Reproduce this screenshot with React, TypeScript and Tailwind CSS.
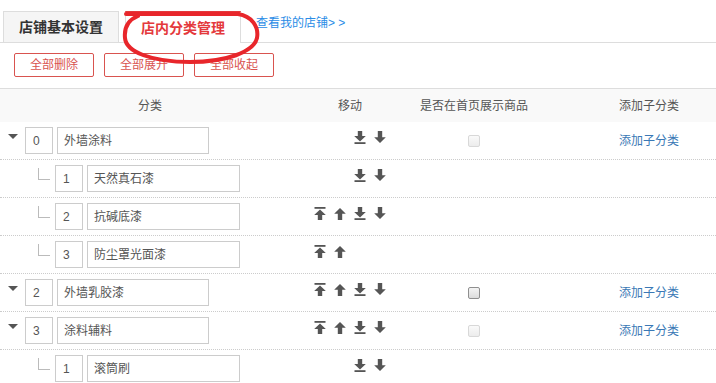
import React from "react";

type Row = {
  level: 0 | 1;
  sort: string;
  name: string;
  moves: [boolean, boolean, boolean, boolean];
  check?: "on" | "off";
  addChild?: boolean;
};

const rows: Row[] = [
  { level: 0, sort: "0", name: "外墙涂料", moves: [false, false, true, true], check: "off", addChild: true },
  { level: 1, sort: "1", name: "天然真石漆", moves: [false, false, true, true] },
  { level: 1, sort: "2", name: "抗碱底漆", moves: [true, true, true, true] },
  { level: 1, sort: "3", name: "防尘罩光面漆", moves: [true, true, false, false] },
  { level: 0, sort: "2", name: "外墙乳胶漆", moves: [true, true, true, true], check: "on", addChild: true },
  { level: 0, sort: "3", name: "涂料辅料", moves: [true, true, true, true], check: "off", addChild: true },
  { level: 1, sort: "1", name: "滚筒刷", moves: [false, false, true, true] },
];

function MoveIcon({ kind }: { kind: number }) {
  // 0: top, 1: up, 2: bottom, 3: down
  const up = kind < 2;
  const bar = kind === 0 || kind === 2;
  return (
    <svg width="12" height="13" viewBox="0 0 12 13" className="block">
      <g fill="#555" transform={up ? undefined : "rotate(180 6 6.5)"}>
        {bar && <rect x="0.5" y="0" width="11" height="1.8" />}
        <path d={bar ? "M6 2.6 L11.8 8 L8.2 8 L8.2 13 L3.8 13 L3.8 8 L0.2 8 Z" : "M6 1 L11.8 6.8 L8.2 6.8 L8.2 13 L3.8 13 L3.8 6.8 L0.2 6.8 Z"} />
      </g>
    </svg>
  );
}

function Checkbox({ state }: { state: "on" | "off" }) {
  return state === "on" ? (
    <span className="block w-[12px] h-[12px] rounded-[2px] border border-[#8f8f8f] bg-gradient-to-b from-[#f4f4f4] to-[#dcdcdc]" />
  ) : (
    <span className="block w-[12px] h-[12px] rounded-[2px] border border-[#d8d8d8] bg-gradient-to-b from-[#fafafa] to-[#ececec]" />
  );
}

export default function App() {
  return (
    <div
      className="relative w-[716px] h-[383px] overflow-hidden bg-white text-[#555]"
      style={{ fontFamily: '"Liberation Sans", "Noto Sans CJK SC", sans-serif' }}
    >
      {/* tabs */}
      <div className="flex items-end h-[43px] pl-[3px] border-b border-[#ddd]">
        <div className="w-[116px] h-[31px] flex items-center justify-center bg-[#f5f5f5] border border-b-0 border-[#ddd] text-[14px] font-bold text-[#333]">
          店铺基本设置
        </div>
        <div className="ml-[6px] w-[116px] h-[32px] -mb-px flex items-center justify-center bg-white border border-b-0 border-[#ddd] border-t-2 border-t-[#e4393c] text-[14px] font-bold text-[#e4393c]">
          店内分类管理
        </div>
        <a className="ml-[15px] mb-[10px] text-[12px] text-[#2a8ce6]">查看我的店铺&gt; &gt;</a>
      </div>

      {/* buttons */}
      <div className="flex gap-[10px] pl-[14px] pt-[10px] h-[45px]">
        {["全部删除", "全部展开", "全部收起"].map((t) => (
          <button
            key={t}
            className="w-[80px] h-[24px] border border-[#d9534f] rounded-[2px] text-[12px] text-[#d9534f] bg-white"
          >
            {t}
          </button>
        ))}
      </div>

      {/* table */}
      <div className="border-t border-[#ddd]">
        <div className="grid grid-cols-[300px_100px_148px_1fr] h-[33px] items-center bg-[#f9f9f9] text-[12px] text-[#555]">
          <div className="text-center">分类</div>
          <div className="text-center">移动</div>
          <div className="text-center">是否在首页展示商品</div>
          <div className="text-center pl-[34px]">添加子分类</div>
        </div>
        {rows.map((r, i) => (
          <div
            key={i}
            className="grid grid-cols-[300px_100px_148px_1fr] h-[38px] items-center border-b border-dotted border-[#ccc] text-[12px]"
          >
            <div className="flex items-center">
              {r.level === 0 ? (
                <>
                  <span className="ml-[8px] w-0 h-0 border-l-[5px] border-r-[5px] border-t-[5px] border-l-transparent border-r-transparent border-t-[#555] -mt-[8px]" />
                  <span className="ml-[7px] w-[28px] h-[27px] border border-[#ccc] flex items-center pl-[7px]">{r.sort}</span>
                  <span className="ml-[4px] w-[152px] h-[27px] border border-[#ccc] flex items-center pl-[6px]">{r.name}</span>
                </>
              ) : (
                <>
                  <span className="ml-[38px] w-[12px] h-[12px] border-l border-b border-[#bbb] -mt-[10px]" />
                  <span className="ml-[5px] w-[28px] h-[27px] border border-[#ccc] flex items-center pl-[7px]">{r.sort}</span>
                  <span className="ml-[4px] w-[153px] h-[27px] border border-[#ccc] flex items-center pl-[6px]">{r.name}</span>
                </>
              )}
            </div>
            <div className="flex gap-[8px] pl-[14px] -mt-[6px]">
              {r.moves.map((m, k) => (
                <span key={k} className={m ? "" : "invisible"}>
                  <MoveIcon kind={k} />
                </span>
              ))}
            </div>
            <div className="flex justify-center">
              {r.check && <Checkbox state={r.check} />}
            </div>
            <div className="text-center pl-[34px] text-[#3a78b5]">
              {r.addChild ? "添加子分类" : ""}
            </div>
          </div>
        ))}
      </div>

      {/* hand-drawn highlight */}
      <svg className="absolute left-0 top-0 pointer-events-none" width="716" height="383">
        <path
          d="M126 14 L238 14 C252 16 259 27 257 38 C254 52 226 62 190 62 C152 62 126 52 125 38 C124 28 128 20 138 16"
          fill="none"
          stroke="#e8262b"
          strokeWidth="4"
          strokeLinecap="round"
        />
      </svg>
    </div>
  );
}
